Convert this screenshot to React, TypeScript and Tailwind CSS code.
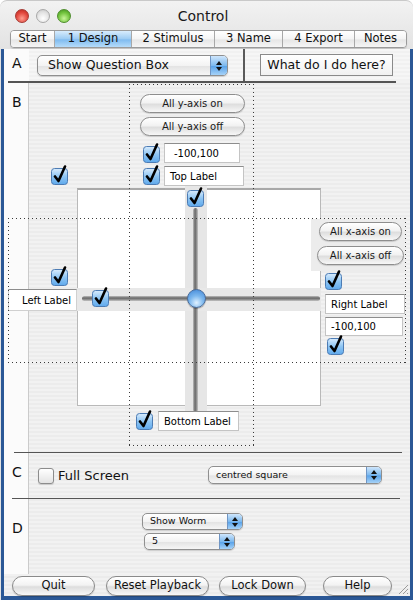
import React from 'react'

const font = "font-['DejaVu_Sans',sans-serif]"
const dotH = 'bg-[repeating-linear-gradient(to_right,#3a3a3a_0_1px,transparent_1px_4px)]'
const dotV = 'bg-[repeating-linear-gradient(to_bottom,#3a3a3a_0_1px,transparent_1px_4px)]'
const stripe = 'bg-[repeating-linear-gradient(to_bottom,#f1f1f1_0_2px,#ebebeb_2px_4px)]'

function Check({ checked = true, className = '' }: { checked?: boolean; className?: string }) {
  return (
    <svg width="18" height="20" viewBox="0 0 18 20" className={className}>
      <defs>
        <linearGradient id="cbOn" x1="0" y1="0" x2="0" y2="1">
          <stop offset="0" stopColor="#d9ecfd" />
          <stop offset="0.5" stopColor="#8ec5f3" />
          <stop offset="1" stopColor="#5fa9ec" />
        </linearGradient>
        <linearGradient id="cbOff" x1="0" y1="0" x2="0" y2="1">
          <stop offset="0" stopColor="#ffffff" />
          <stop offset="1" stopColor="#e2e2e2" />
        </linearGradient>
      </defs>
      <rect
        x="0.5"
        y="3.5"
        width="16"
        height="16"
        rx="3"
        fill={checked ? 'url(#cbOn)' : 'url(#cbOff)'}
        stroke={checked ? '#4d7cb4' : '#8c8c8c'}
      />
      {checked && (
        <path
          d="M4 11.5 L7.5 16 L14 1.5"
          stroke="#000"
          strokeWidth="2.6"
          fill="none"
          strokeLinecap="round"
          strokeLinejoin="round"
        />
      )}
    </svg>
  )
}

function Pill({ label, className = '' }: { label: string; className?: string }) {
  return (
    <div
      className={`absolute flex items-center justify-center rounded-full border border-[#8e8e8e] bg-[linear-gradient(to_bottom,#ffffff,#f2f2f2_45%,#dedede_55%,#f7f7f7)] text-[10px] text-[#1a1a1a] shadow-[0_1px_1px_rgba(0,0,0,0.15)] ${className}`}
    >
      {label}
    </div>
  )
}

function Field({ label, className = '', right = false }: { label: string; className?: string; right?: boolean }) {
  return (
    <div
      className={`absolute flex items-center bg-white border border-[#c4c4c4] border-t-[#8d8d8d] text-[10px] text-black ${
        right ? 'justify-end pr-[5px]' : 'pl-[5px]'
      } ${className}`}
    >
      {label}
    </div>
  )
}

function Popup({ label, className = '', small = false }: { label: string; className?: string; small?: boolean }) {
  return (
    <div
      className={`flex items-stretch rounded-[5px] border border-[#8f8f8f] bg-[linear-gradient(to_bottom,#ffffff,#f3f3f3_50%,#e4e4e4_55%,#f6f6f6)] shadow-[0_1px_1px_rgba(0,0,0,0.15)] overflow-hidden ${className}`}
    >
      <span className={`flex-1 flex items-center text-[#111] ${small ? 'pl-[7px] text-[9.5px]' : 'pl-[10px] text-[12.5px]'}`}>
        {label}
      </span>
      <span
        className={`flex flex-col items-center justify-center gap-[2px] bg-[linear-gradient(to_bottom,#cfe6fc,#7db9ee_50%,#5ba4ea_55%,#a6d2f7)] border-l border-[#6f95c4] ${
          small ? 'w-[15px]' : 'w-[17px]'
        }`}
      >
        <svg width="6" height="4" viewBox="0 0 6 4">
          <path d="M0 4 L3 0 L6 4 Z" fill="#111" />
        </svg>
        <svg width="6" height="4" viewBox="0 0 6 4">
          <path d="M0 0 L3 4 L6 0 Z" fill="#111" />
        </svg>
      </span>
    </div>
  )
}

function BigButton({ label, className = '' }: { label: string; className?: string }) {
  return (
    <div
      className={`h-[20px] flex items-center justify-center rounded-full border border-[#8a8a8a] bg-[linear-gradient(to_bottom,#ffffff,#f3f3f3_45%,#dddddd_55%,#f8f8f8)] text-[11.5px] text-[#111] shadow-[0_1px_1px_rgba(0,0,0,0.2)] ${className}`}
    >
      {label}
    </div>
  )
}

function DottedBox({ className = '' }: { className?: string }) {
  return (
    <div className={`absolute pointer-events-none z-10 ${className}`}>
      <div className={`absolute left-0 top-0 w-full h-px ${dotH}`} />
      <div className={`absolute left-0 bottom-0 w-full h-px ${dotH}`} />
      <div className={`absolute left-0 top-0 h-full w-px ${dotV}`} />
      <div className={`absolute right-0 top-0 h-full w-px ${dotV}`} />
    </div>
  )
}

const TABS = [
  { label: 'Start', w: 'w-[43px]' },
  { label: '1 Design', w: 'w-[77px]', active: true },
  { label: '2 Stimulus', w: 'w-[83px]' },
  { label: '3 Name', w: 'w-[68px]' },
  { label: '4 Export', w: 'w-[72px]' },
  { label: 'Notes', w: 'w-[52px]' },
]

export default function App() {
  return (
    <div className={`w-[413px] h-[600px] bg-white overflow-hidden ${font}`}>
      <div className="w-[413px] h-[600px] flex flex-col rounded-t-[7px] overflow-hidden bg-[linear-gradient(to_bottom,#f2f2f2,#e2e2e2_50px)] border-t border-[#c9c9c9]">
        {/* title bar */}
        <div className="h-[29px] flex items-center relative">
          <div className="flex items-center gap-[7px] pl-[15px]">
            <span className="w-[14px] h-[14px] rounded-full border border-[#a53a34] bg-[radial-gradient(circle_at_50%_70%,#ff9d8f,#e2483e_55%,#b7231b)]" />
            <span className="w-[14px] h-[14px] rounded-full border border-[#a8a8a8] bg-[radial-gradient(circle_at_50%_70%,#ffffff,#e4e4e4_55%,#c5c5c5)]" />
            <span className="w-[14px] h-[14px] rounded-full border border-[#4e8d2c] bg-[radial-gradient(circle_at_50%_70%,#c8f59a,#73c43e_55%,#3f8f1d)]" />
          </div>
          <span className="flex-1 text-center text-[14px] text-[#1a1a1a] pr-[78px] pt-[2px]">Control</span>
        </div>
        {/* tabs */}
        <div className="h-[19px] pl-[10px] flex">
          <div className="flex h-[18px] rounded-[4px] border border-[#9a9a9a] overflow-hidden shadow-[0_1px_1px_rgba(0,0,0,0.15)]">
            {TABS.map((t, i) => (
              <div
                key={t.label}
                className={`${t.w} flex items-center justify-center text-[11.5px] text-[#111] ${i > 0 ? 'border-l border-[#a8a8a8]' : ''} ${
                  t.active
                    ? 'bg-[linear-gradient(to_bottom,#d8ecfd,#9ccbf3_50%,#7fbbf0_55%,#b5dcfa)]'
                    : 'bg-[linear-gradient(to_bottom,#ffffff,#f4f4f4_50%,#e6e6e6_55%,#f5f5f5)]'
                }`}
              >
                {t.label}
              </div>
            ))}
          </div>
        </div>

        {/* content */}
        <div className="flex-1 flex flex-col border-x-[3px] border-b-[4px] border-[#2b5896] ml-px mr-0 bg-[linear-gradient(to_right,#fbfbfb_0_24px,#cbcbcb_24px_25px,transparent_25px),repeating-linear-gradient(to_bottom,#f2f2f2_0_2px,#ececec_2px_4px)]">
          {/* A */}
          <div className="h-[32px] flex bg-[linear-gradient(to_right,#fbfbfb_0_25px,transparent_25px),repeating-linear-gradient(to_bottom,#f6f6f6_0_2px,#f1f1f1_2px_4px)]">
            <div className="w-[25px] text-[14px] text-[#111] pl-[8px] pt-[4px]">A</div>
            <div className="flex-1 flex items-start">
              <Popup label="Show Question Box" className="ml-[8px] mt-[6px] w-[191px] h-[21px]" />
              <div className="ml-[15px] w-[2px] h-[32px] bg-[#5a5a5a]" />
              <div className="ml-[15px] mt-[5px] w-[133px] h-[22px] flex items-center justify-center border border-[#8a8a8a] bg-[linear-gradient(to_bottom,#ffffff,#f1f1f1)] text-[12.5px] text-[#111]">
                What do I do here?
              </div>
            </div>
          </div>
          <div className="ml-[4px] w-[388px] h-[2px] bg-[#555]" />

          {/* B */}
          <div className="h-[369px] flex">
            <div className="w-[25px] text-[14px] text-[#111] pl-[8px] pt-[9px]">B</div>
            <div className="flex-1 relative">
              <Pill label="All y-axis on" className="left-[111px] top-[11px] w-[105px] h-[19px]" />
              <Pill label="All y-axis off" className="left-[111px] top-[34px] w-[105px] h-[19px]" />
              <Check className="absolute left-[114px] top-[60px]" />
              <Field label="-100,100" className="left-[135px] top-[60px] w-[76px] h-[20px] pl-[9px]" />
              <Check className="absolute left-[114px] top-[82px]" />
              <Field label="Top Label" className="left-[135px] top-[83px] w-[80px] h-[20px]" />
              <Check className="absolute left-[22px] top-[82px]" />

              {/* graph area */}
              <div className="absolute left-[48px] top-[105px] w-[244px] h-[218px] bg-white border-t-2 border-x border-b border-[#b9b9b9] border-t-[#a9a9a9]" />
              <div className="absolute left-[156px] top-[103px] w-[22px] h-[226px] bg-[#e6e6e6]" />
              <div className="absolute left-[48px] top-[205px] w-[244px] h-[23px] bg-[#e8e8e8]" />
              <div className="absolute left-[164px] top-[125px] w-[5px] h-[204px] rounded-full bg-[linear-gradient(to_right,#bdbdbd,#6a6a6a_40%,#7d7d7d_60%,#c4c4c4)]" />
              <div className="absolute left-[53px] top-[213px] w-[238px] h-[5px] rounded-full bg-[linear-gradient(to_bottom,#bdbdbd,#6a6a6a_40%,#7d7d7d_60%,#c4c4c4)]" />
              <Check className="absolute left-[158px] top-[104px]" />
              <Check className="absolute left-[63px] top-[204px]" />
              <div className="absolute left-[158px] top-[206px] w-[19px] h-[19px] rounded-full border border-[#4a6d9c] bg-[radial-gradient(circle_at_50%_75%,#e0f1ff,#7db8ee_45%,#3c83d6)] shadow-[0_1px_1px_rgba(0,0,0,0.3)]" />
              <Field label="Left Label" right className="left-[-21px] top-[206px] w-[69px] h-[22px] border-[#d0d0d0]" />
              <Check className="absolute left-[22px] top-[183px]" />

              {/* right controls */}
              <div className="absolute left-[282px] top-[136px] w-[94px] h-[52px] bg-[#ececec]" />
              <Pill label="All x-axis on" className="left-[290px] top-[139px] w-[83px] h-[19px]" />
              <Pill label="All x-axis off" className="left-[288px] top-[163px] w-[87px] h-[19px]" />
              <Check className="absolute left-[296px] top-[187px]" />
              <Field label="Right Label" className="left-[296px] top-[211px] w-[80px] h-[20px]" />
              <Field label="-100,100" className="left-[296px] top-[234px] w-[78px] h-[19px]" />
              <Check className="absolute left-[298px] top-[252px]" />

              {/* bottom label */}
              <Check className="absolute left-[107px] top-[327px]" />
              <Field label="Bottom Label" className="left-[129px] top-[328px] w-[81px] h-[20px]" />

              <DottedBox className="left-[100px] top-[1px] w-[125px] h-[362px]" />
              <DottedBox className="left-[-21px] top-[135px] w-[398px] h-[145px]" />
            </div>
          </div>
          <div className="ml-[10px] w-[388px] h-px bg-[#555]" />

          {/* C */}
          <div className="h-[45px] flex">
            <div className="w-[25px] text-[14px] text-[#111] pl-[8px] pt-[9px]">C</div>
            <div className="flex-1 flex items-center justify-between pr-[28px]">
              <div className="flex items-center gap-[4px] pl-[9px]">
                <span className="w-[16px] h-[16px] rounded-[3px] border border-[#8c8c8c] bg-[linear-gradient(to_bottom,#ffffff,#e3e3e3)] shadow-[0_1px_1px_rgba(0,0,0,0.15)]" />
                <span className="text-[13px] text-[#111]">Full Screen</span>
              </div>
              <Popup label="centred square" small className="w-[174px] h-[18px] -mt-[1px]" />
            </div>
          </div>
          <div className="ml-[8px] w-[388px] h-px bg-[#555]" />

          {/* D */}
          <div className="h-[75px] flex">
            <div className="w-[25px] text-[14px] text-[#111] pl-[8px] pt-[19px]">D</div>
            <div className="flex-1 flex flex-col pl-[113px] pt-[14px] gap-[3px]">
              <Popup label="Show Worm" small className="w-[101px] h-[17px]" />
              <Popup label="5" small className="ml-[2px] w-[91px] h-[17px]" />
            </div>
          </div>

          {/* buttons */}
          <div className={`flex-1 flex items-start pt-[2px] pl-[8px] relative ${stripe}`}>
            <BigButton label="Quit" className="w-[83px]" />
            <BigButton label="Reset Playback" className="ml-[11px] w-[103px]" />
            <BigButton label="Lock Down" className="ml-[10px] w-[87px]" />
            <BigButton label="Help" className="ml-[17px] w-[69px]" />
            <svg width="12" height="12" viewBox="0 0 12 12" className="absolute right-[1px] bottom-[1px]">
              <path d="M11 2 L2 11 M11 6 L6 11 M11 10 L10 11" stroke="#9a9a9a" strokeWidth="1" />
            </svg>
          </div>
        </div>
      </div>
    </div>
  )
}
